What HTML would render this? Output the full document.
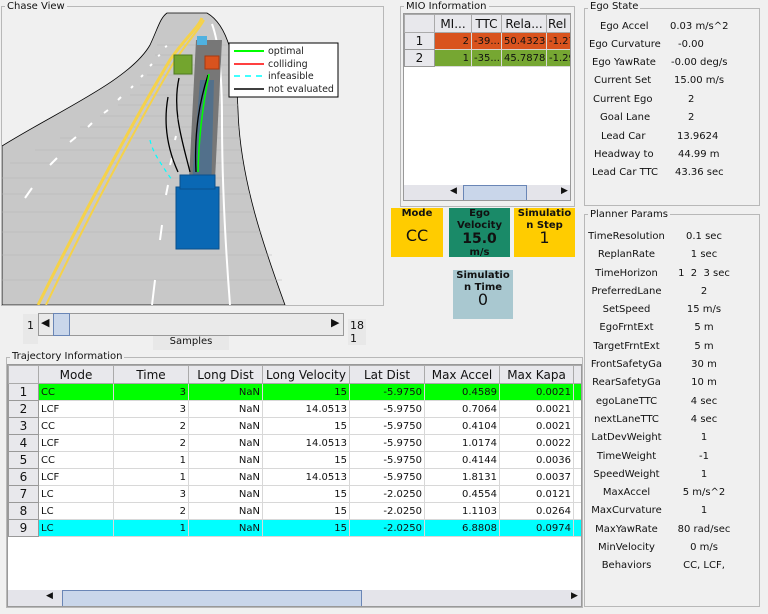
<!DOCTYPE html>
<html><head><meta charset="utf-8"><style>
*{box-sizing:border-box}
body{margin:0;width:768px;height:614px;background:#f0f0f0;font-family:"DejaVu Sans","Liberation Sans",sans-serif;font-size:10px;color:#111;position:relative;overflow:hidden}
.abs{position:absolute}
.frame{position:absolute;border:1px solid #b8b8b8}
.ttl{position:absolute;background:#f0f0f0;padding:0 2px;font-size:10px;line-height:11px}
table{border-collapse:collapse;font-size:10px}
td{border:1px solid #d8d8d8;padding:0 2px;height:17px;text-align:right;white-space:nowrap;overflow:hidden}
.rh{background:#e8e8ec;text-align:center;border:1px solid #999;font-size:12px}
th{background:#e8e8ec;border:1px solid #aaa;font-weight:normal;font-size:12px;height:18px;white-space:nowrap;overflow:hidden}
.kv{position:absolute;font-size:10px;white-space:nowrap}
.tile{position:absolute;text-align:center;font-weight:bold;font-size:10px;line-height:12px;overflow:hidden}
</style></head><body>

<!-- Chase view -->
<div class="frame" style="left:1px;top:6px;width:383px;height:300px"></div>
<div class="ttl" style="left:5px;top:1px">Chase View</div>
<svg class="abs" style="left:2px;top:12px" width="380" height="293" viewBox="2 12 380 293">
<rect x="2" y="12" width="380" height="293" fill="#f0f0f0"/>
<path d="M2,146 C60,110 130,80 150,45 C158,28 160,18 167,13 L207,13 C228,25 236,60 238,110 C240,180 265,250 285,305 L2,305 Z" fill="#c8c8c8" stroke="#000" stroke-width="0.8"/>
<g stroke="#b4b4b4" stroke-width="0.6">
<line x1="2" y1="280" x2="282" y2="280"/><line x1="2" y1="255" x2="272" y2="255"/><line x1="2" y1="232" x2="262" y2="232"/><line x1="2" y1="212" x2="254" y2="212"/><line x1="2" y1="194" x2="250" y2="194"/><line x1="2" y1="178" x2="246" y2="178"/><line x1="10" y1="163" x2="243" y2="163"/><line x1="35" y1="150" x2="241" y2="150"/><line x1="60" y1="138" x2="240" y2="138"/><line x1="80" y1="127" x2="239" y2="127"/><line x1="100" y1="116" x2="238" y2="116"/><line x1="118" y1="105" x2="238" y2="105"/><line x1="130" y1="95" x2="237" y2="95"/><line x1="140" y1="85" x2="237" y2="85"/><line x1="147" y1="75" x2="236" y2="75"/><line x1="152" y1="65" x2="234" y2="65"/><line x1="155" y1="55" x2="232" y2="55"/><line x1="157" y1="45" x2="229" y2="45"/>
</g>
<path d="M38,305 C90,200 140,110 170,60 C185,38 198,28 202,18" stroke="#f5d24a" stroke-width="3" fill="none"/>
<path d="M46,305 C96,200 146,110 174,62 C189,40 200,28 204,20" stroke="#f5d24a" stroke-width="2" fill="none"/>
<path d="M230,305 C225,240 222,180 222,120 C222,70 218,40 212,24" stroke="#fff" stroke-width="2" fill="none"/>
<path d="M152,305 L155,280 M160,240 L162,225 M166,195 L168,185 M170,165 L172,158 M175,140 L176,136 M178,120 L178,117 M25,198 L32,188 M50,165 L57,158 M70,142 L76,137 M88,127 L92,123 M104,113 L108,110 M118,100 L121,97 M131,88 L133,86 M141,77 L143,75 M150,66 L152,64 M158,56 L160,55 M165,47 L167,46" stroke="#fff" stroke-width="2" fill="none"/>
<path d="M186,240 L196,40 L222,40 L212,240 Z" fill="#777"/>
<path d="M188,235 L200,80 L214,80 L210,235 Z" fill="#3a6c9a" opacity="0.6"/>
<path d="M178,172 C168,150 163,125 168,97" stroke="#000" stroke-width="1.3" fill="none"/>
<path d="M190,172 C182,140 172,110 179,78" stroke="#000" stroke-width="1.3" fill="none"/>
<path d="M196,172 C194,130 200,100 208,75" stroke="#000" stroke-width="1.3" fill="none"/>
<path d="M198,172 C199,130 204,100 209,74" stroke="#0f0" stroke-width="1.5" fill="none"/>
<path d="M150,140 C152,150 158,160 172,180" stroke="#0ff" stroke-width="1.2" stroke-dasharray="4,4" fill="none"/>
<rect x="176" y="187" width="43" height="62" fill="#0a68b4" stroke="#0a4f8c"/>
<rect x="180" y="175" width="35" height="14" fill="#0a68b4" stroke="#0a4f8c"/>
<rect x="174" y="55" width="18" height="19" fill="#73a52e" stroke="#4e7a1f"/>
<rect x="205" y="56" width="14" height="13" fill="#d9531e" stroke="#a63a10"/>
<rect x="197" y="36" width="10" height="9" fill="#4fb1e0"/>
<rect x="229" y="43" width="109" height="54" fill="#fff" stroke="#000"/>
<line x1="234" y1="51" x2="264" y2="51" stroke="#0f0" stroke-width="2"/>
<line x1="234" y1="64" x2="264" y2="64" stroke="#f00" stroke-width="1.5"/>
<line x1="234" y1="76" x2="264" y2="76" stroke="#0ff" stroke-width="1.5" stroke-dasharray="6,5"/>
<line x1="234" y1="89" x2="264" y2="89" stroke="#000" stroke-width="1.5"/>
<g font-size="9.5" fill="#222" font-family="DejaVu Sans, sans-serif"><text x="268" y="54">optimal</text><text x="268" y="67">colliding</text><text x="268" y="79">infeasible</text><text x="268" y="92">not evaluated</text></g>
</svg>

<!-- slider -->
<div class="abs" style="left:23px;top:314px;width:15px;height:30px;background:#e8e8e8;font-size:11px;padding:5px 0 0 4px">1</div>
<div class="abs" style="left:38px;top:313px;width:306px;height:23px;background:#eaeaea;border:1px solid #999"></div>
<div class="abs" style="left:41px;top:316px;width:10px;height:17px;font-size:11px">◀</div>
<div class="abs" style="left:53px;top:313px;width:17px;height:23px;background:#c9d6ea;border:1px solid #6a86b6"></div>
<div class="abs" style="left:331px;top:316px;width:10px;height:17px;font-size:11px">▶</div>
<div class="abs" style="left:348px;top:319px;font-size:11px;line-height:13px;background:#e8e8e8;padding:0 2px">18<br>1</div>
<div class="abs" style="left:153px;top:336px;width:76px;height:14px;background:#e8e8e8;font-size:10px;text-align:center">Samples</div>

<!-- Trajectory -->
<div class="frame" style="left:6px;top:357px;width:577px;height:251px"></div>
<div class="ttl" style="left:10px;top:351px">Trajectory Information</div>
<div class="abs" style="left:7px;top:364px;width:575px;height:243px;background:#fff;border:1px solid #999;overflow:hidden">
<table style="table-layout:fixed;width:600px">
<colgroup><col style="width:30px"><col style="width:75px"><col style="width:75px"><col style="width:74px"><col style="width:87px"><col style="width:75px"><col style="width:75px"><col style="width:74px"><col style="width:35px"></colgroup>
<tr><th></th><th>Mode</th><th>Time</th><th>Long Dist</th><th>Long Velocity</th><th>Lat Dist</th><th>Max Accel</th><th>Max Kapa</th><th>M</th></tr>
<tr style="background:#0f0"><td class="rh">1</td><td style="text-align:left">CC</td><td>3</td><td>NaN</td><td>15</td><td>-5.9750</td><td>0.4589</td><td>0.0021</td><td></td></tr>
<tr><td class="rh">2</td><td style="text-align:left">LCF</td><td>3</td><td>NaN</td><td>14.0513</td><td>-5.9750</td><td>0.7064</td><td>0.0021</td><td></td></tr>
<tr><td class="rh">3</td><td style="text-align:left">CC</td><td>2</td><td>NaN</td><td>15</td><td>-5.9750</td><td>0.4104</td><td>0.0021</td><td></td></tr>
<tr><td class="rh">4</td><td style="text-align:left">LCF</td><td>2</td><td>NaN</td><td>14.0513</td><td>-5.9750</td><td>1.0174</td><td>0.0022</td><td></td></tr>
<tr><td class="rh">5</td><td style="text-align:left">CC</td><td>1</td><td>NaN</td><td>15</td><td>-5.9750</td><td>0.4144</td><td>0.0036</td><td></td></tr>
<tr><td class="rh">6</td><td style="text-align:left">LCF</td><td>1</td><td>NaN</td><td>14.0513</td><td>-5.9750</td><td>1.8131</td><td>0.0037</td><td></td></tr>
<tr><td class="rh">7</td><td style="text-align:left">LC</td><td>3</td><td>NaN</td><td>15</td><td>-2.0250</td><td>0.4554</td><td>0.0121</td><td></td></tr>
<tr><td class="rh">8</td><td style="text-align:left">LC</td><td>2</td><td>NaN</td><td>15</td><td>-2.0250</td><td>1.1103</td><td>0.0264</td><td></td></tr>
<tr style="background:#0ff"><td class="rh">9</td><td style="text-align:left">LC</td><td>1</td><td>NaN</td><td>15</td><td>-2.0250</td><td>6.8808</td><td>0.0974</td><td></td></tr>
</table>
<div class="abs" style="left:0;top:225px;width:575px;height:17px;background:#e4e4ea"></div>
<div class="abs" style="left:38px;top:226px;width:14px;height:15px;font-size:9px">◀</div>
<div class="abs" style="left:54px;top:225px;width:300px;height:17px;background:#c9d6ea;border:1px solid #6a86b6"></div>
<div class="abs" style="left:563px;top:226px;font-size:9px">▶</div>
</div>

<!-- MIO -->
<div class="frame" style="left:400px;top:6px;width:175px;height:201px"></div>
<div class="ttl" style="left:404px;top:1px">MIO Information</div>
<div class="abs" style="left:403px;top:13px;width:168px;height:188px;background:#fff;border:1px solid #999;overflow:hidden">
<table style="table-layout:fixed;width:180px">
<colgroup><col style="width:30px"><col style="width:37px"><col style="width:30px"><col style="width:45px"><col style="width:38px"></colgroup>
<tr><th></th><th>MI...</th><th>TTC</th><th>Rela...</th><th style="text-align:left">Rel</th></tr>
<tr style="background:#d9531e"><td class="rh">1</td><td>2</td><td style="text-align:left">-39...</td><td>50.4323</td><td style="text-align:left">-1.27</td></tr>
<tr style="background:#76a732"><td class="rh">2</td><td>1</td><td style="text-align:left">-35...</td><td>45.7878</td><td style="text-align:left">-1.29</td></tr>
</table>
<div class="abs" style="left:0;top:171px;width:168px;height:16px;background:#e4e4ea"></div>
<div class="abs" style="left:46px;top:172px;font-size:9px">◀</div>
<div class="abs" style="left:59px;top:171px;width:64px;height:16px;background:#c9d6ea;border:1px solid #6a86b6"></div>
<div class="abs" style="left:157px;top:172px;font-size:9px">▶</div>
</div>

<!-- tiles -->
<div class="tile" style="left:391px;top:208px;width:52px;height:49px;background:#ffcc00">Mode<div style="font-size:16px;font-weight:normal;margin-top:10px">CC</div></div>
<div class="tile" style="left:449px;top:208px;width:61px;height:49px;background:#1a8a68">Ego<br>Velocity<div style="font-size:14px;line-height:15px">15.0</div>m/s</div>
<div class="tile" style="left:514px;top:208px;width:61px;height:49px;background:#ffcc00">Simulatio<br>n Step<div style="font-size:16px;font-weight:normal">1</div></div>
<div class="tile" style="left:453px;top:270px;width:60px;height:49px;background:#a9c8d0">Simulatio<br>n Time<div style="font-size:16px;font-weight:normal">0</div></div>

<!-- Ego state -->
<div class="frame" style="left:584px;top:8px;width:176px;height:198px"></div>
<div class="ttl" style="left:588px;top:1px">Ego State</div>
<div class="kv" style="left:600px;top:21px">Ego Accel</div><div class="kv" style="left:670px;top:21px">0.03 m/s^2</div>
<div class="kv" style="left:589px;top:39px">Ego Curvature</div><div class="kv" style="left:678px;top:39px">-0.00</div>
<div class="kv" style="left:592px;top:57px">Ego YawRate</div><div class="kv" style="left:671px;top:57px">-0.00 deg/s</div>
<div class="kv" style="left:594px;top:75px">Current Set</div><div class="kv" style="left:674px;top:75px">15.00 m/s</div>
<div class="kv" style="left:593px;top:94px">Current Ego</div><div class="kv" style="left:688px;top:94px">2</div>
<div class="kv" style="left:600px;top:112px">Goal Lane</div><div class="kv" style="left:688px;top:112px">2</div>
<div class="kv" style="left:601px;top:131px">Lead Car</div><div class="kv" style="left:677px;top:131px">13.9624</div>
<div class="kv" style="left:594px;top:149px">Headway to</div><div class="kv" style="left:678px;top:149px">44.99 m</div>
<div class="kv" style="left:592px;top:167px">Lead Car TTC</div><div class="kv" style="left:675px;top:167px">43.36 sec</div>

<!-- Planner -->
<div class="frame" style="left:584px;top:214px;width:176px;height:393px"></div>
<div class="ttl" style="left:588px;top:209px">Planner Params</div>
<div style="position:absolute;left:584px;top:231px;width:176px;font-size:10px">
<div style="display:flex;flex-direction:column;gap:0">
<div style="display:flex;height:18.3px"><span style="width:85px;text-align:center">TimeResolution</span><span style="width:70px;text-align:center">0.1 sec</span></div>
<div style="display:flex;height:18.3px"><span style="width:85px;text-align:center">ReplanRate</span><span style="width:70px;text-align:center">1 sec</span></div>
<div style="display:flex;height:18.3px"><span style="width:85px;text-align:center">TimeHorizon</span><span style="width:70px;text-align:center">1 &nbsp;2 &nbsp;3 sec</span></div>
<div style="display:flex;height:18.3px"><span style="width:85px;text-align:center">PreferredLane</span><span style="width:70px;text-align:center">2</span></div>
<div style="display:flex;height:18.3px"><span style="width:85px;text-align:center">SetSpeed</span><span style="width:70px;text-align:center">15 m/s</span></div>
<div style="display:flex;height:18.3px"><span style="width:85px;text-align:center">EgoFrntExt</span><span style="width:70px;text-align:center">5 m</span></div>
<div style="display:flex;height:18.3px"><span style="width:85px;text-align:center">TargetFrntExt</span><span style="width:70px;text-align:center">5 m</span></div>
<div style="display:flex;height:18.3px"><span style="width:85px;text-align:center">FrontSafetyGa</span><span style="width:70px;text-align:center">30 m</span></div>
<div style="display:flex;height:18.3px"><span style="width:85px;text-align:center">RearSafetyGa</span><span style="width:70px;text-align:center">10 m</span></div>
<div style="display:flex;height:18.3px"><span style="width:85px;text-align:center">egoLaneTTC</span><span style="width:70px;text-align:center">4 sec</span></div>
<div style="display:flex;height:18.3px"><span style="width:85px;text-align:center">nextLaneTTC</span><span style="width:70px;text-align:center">4 sec</span></div>
<div style="display:flex;height:18.3px"><span style="width:85px;text-align:center">LatDevWeight</span><span style="width:70px;text-align:center">1</span></div>
<div style="display:flex;height:18.3px"><span style="width:85px;text-align:center">TimeWeight</span><span style="width:70px;text-align:center">-1</span></div>
<div style="display:flex;height:18.3px"><span style="width:85px;text-align:center">SpeedWeight</span><span style="width:70px;text-align:center">1</span></div>
<div style="display:flex;height:18.3px"><span style="width:85px;text-align:center">MaxAccel</span><span style="width:70px;text-align:center">5 m/s^2</span></div>
<div style="display:flex;height:18.3px"><span style="width:85px;text-align:center">MaxCurvature</span><span style="width:70px;text-align:center">1</span></div>
<div style="display:flex;height:18.3px"><span style="width:85px;text-align:center">MaxYawRate</span><span style="width:70px;text-align:center">80 rad/sec</span></div>
<div style="display:flex;height:18.3px"><span style="width:85px;text-align:center">MinVelocity</span><span style="width:70px;text-align:center">0 m/s</span></div>
<div style="display:flex;height:18.3px"><span style="width:85px;text-align:center">Behaviors</span><span style="width:70px;text-align:center">CC, LCF,</span></div>
</div></div>
</body></html>
